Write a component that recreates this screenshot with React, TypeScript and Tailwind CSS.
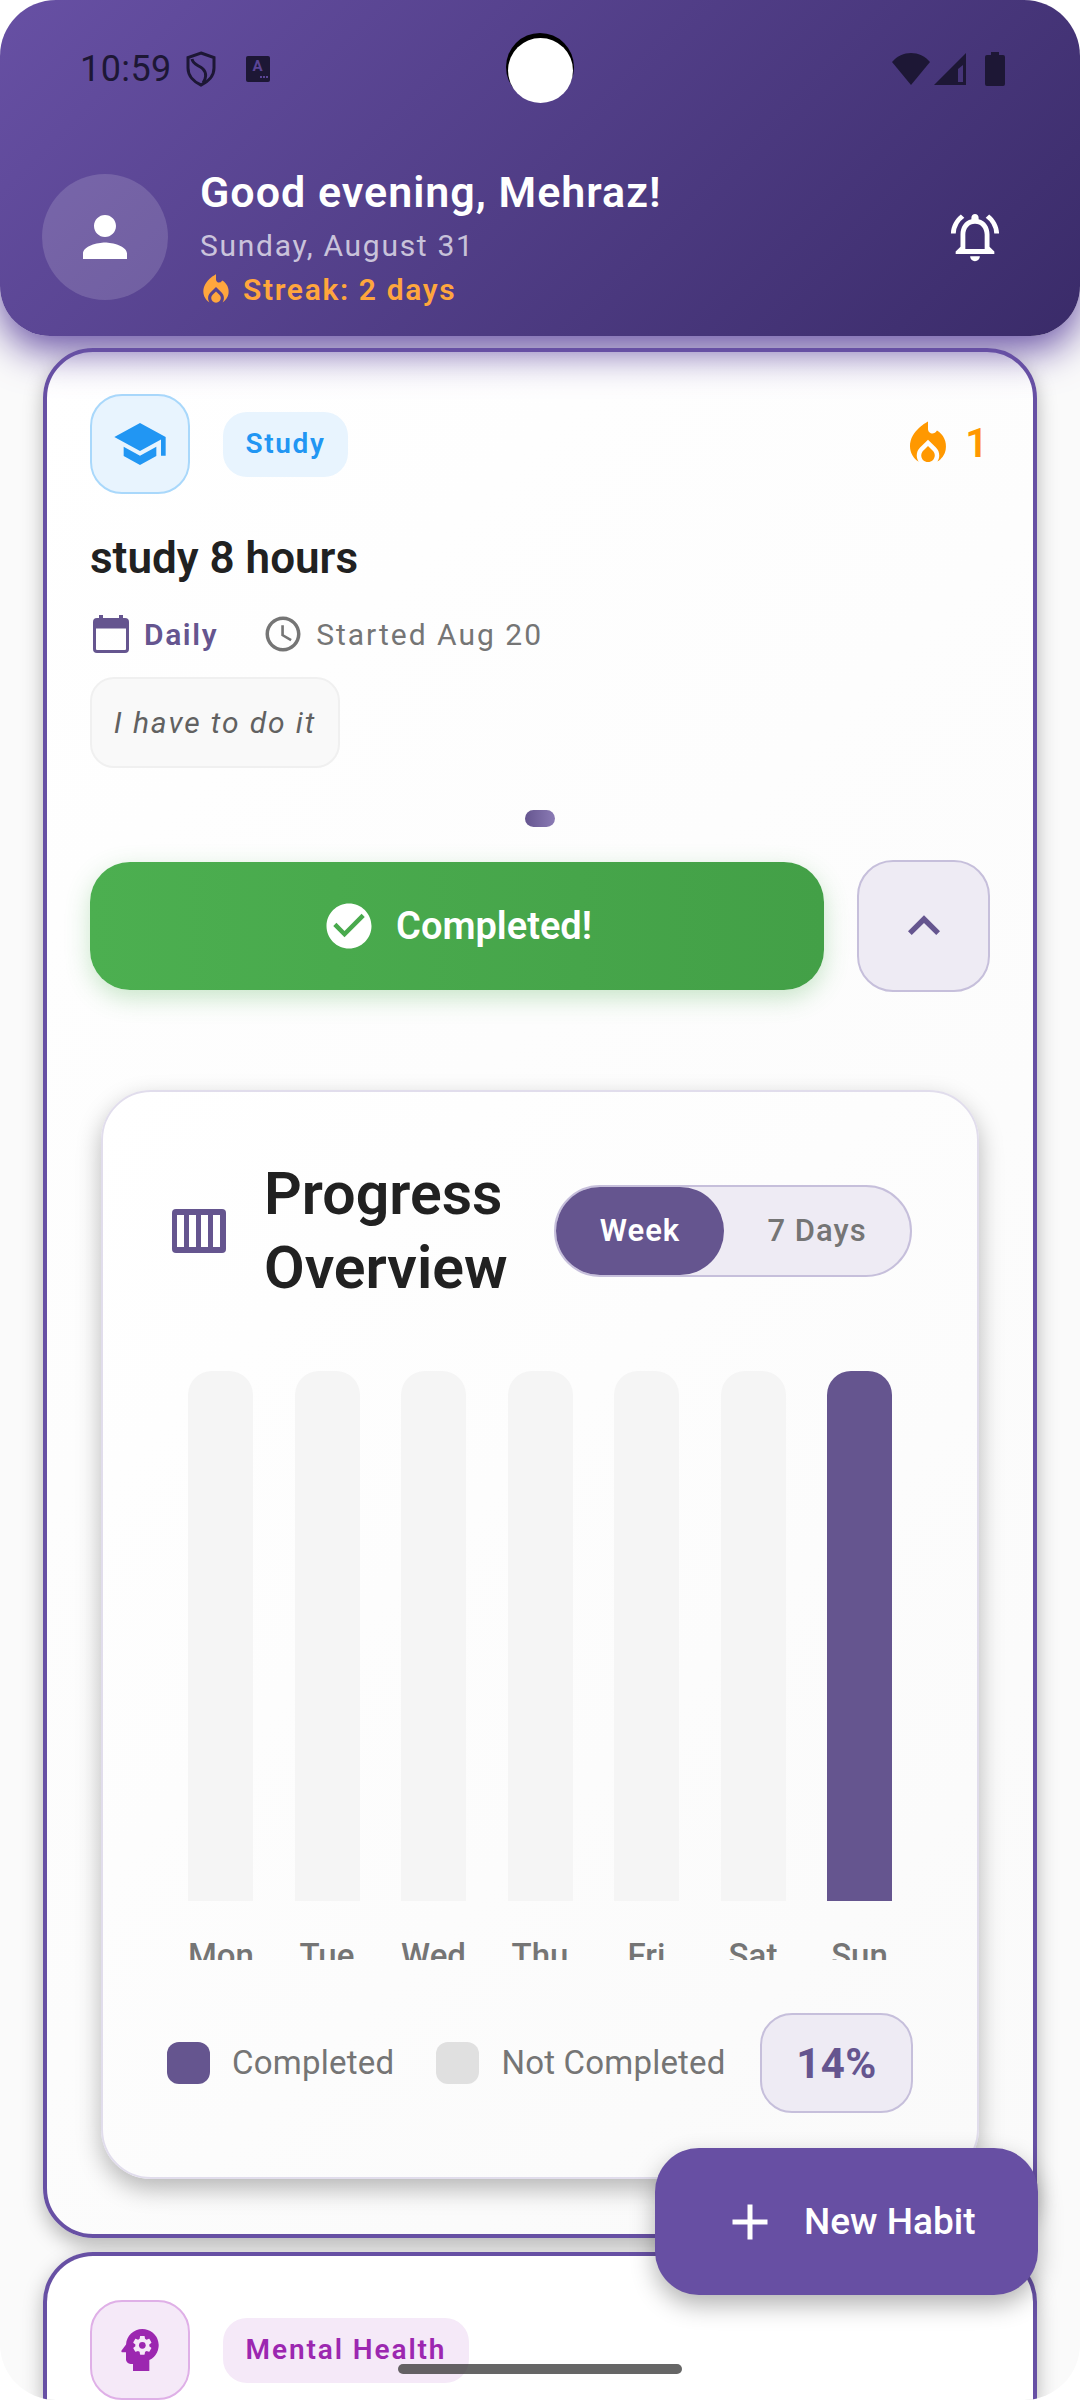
import {
  MdAccessTime,
  MdAdd,
  MdCheckCircle,
  MdExpandLess,
  MdLocalFireDepartment,
  MdOutlineNotificationsActive,
  MdPerson,
  MdPsychology,
  MdSchool,
} from 'react-icons/md';

const DAYS = ['Mon', 'Tue', 'Wed', 'Thu', 'Fri', 'Sat', 'Sun'];

function StatusBar() {
  return (
    <div className="flex h-[50px] items-center justify-between pl-[80px] pr-[75px] text-[#1d1735]">
      <div className="flex items-center">
        <span className="text-[36px] leading-none tracking-[0.4px]">10:59</span>
        {/* shield */}
        <svg width="32" height="36" viewBox="0 0 32 36" className="ml-[13px]" fill="none" stroke="currentColor" strokeWidth="3">
          <path d="M16 2 L29 6.5 V17 C29 25 23 31 16 34 C9 31 3 25 3 17 V6.5 Z" />
          <path d="M7 8 C8 14 14 14 18 18 C22 22 21 28 18 32" />
        </svg>
        <div className="ml-[29px] flex h-[26px] w-[24px] flex-col items-center rounded-[2px] bg-current">
          <span className="text-[15px] font-bold leading-[20px] text-[#5b4595]">A</span>
          <div className="flex w-full justify-end gap-[1px] pr-[2px]">
            <span className="h-[2px] w-[2px] bg-[#5b4595]" />
            <span className="h-[2px] w-[2px] bg-[#5b4595]" />
            <span className="h-[2px] w-[2px] bg-[#5b4595]" />
          </div>
        </div>
      </div>
      <div className="flex items-center">
        <svg width="38" height="32" viewBox="0 0 38 32" fill="currentColor">
          <path d="M0 9 C10 -3 28 -3 38 9 L19 32 Z" />
        </svg>
        <svg width="32" height="32" viewBox="0 0 32 32" fill="currentColor" className="ml-[4px]">
          <path fillRule="evenodd" d="M32 0 V32 H0 Z M29 12 L24 16 V29 H29 Z" />
        </svg>
        <svg width="20" height="34" viewBox="0 0 20 34" fill="currentColor" className="ml-[19px]">
          <path d="M6 0 H14 V3 H18 Q20 3 20 5 V32 Q20 34 18 34 H2 Q0 34 0 32 V5 Q0 3 2 3 H6 Z" />
        </svg>
      </div>
    </div>
  );
}

function Header() {
  return (
    <div className="relative z-10 h-[336px] rounded-b-[50px] bg-[linear-gradient(135deg,#6750a4,#3a2b69)] pt-[44px] shadow-[0_14px_40px_rgba(103,80,164,1)]">
      <StatusBar />
      <div className="mt-[73px] flex items-center pl-[42px] pr-[76px]">
        <div className="-mt-[3px] flex h-[126px] w-[126px] items-center justify-center rounded-full bg-white/15">
          <MdPerson size={66} className="text-white" />
        </div>
        <div className="ml-[32px] flex-1">
          <div className="text-[43px] font-semibold leading-[50px] tracking-[1px] text-white">Good evening, Mehraz!</div>
          <div className="mt-[12px] text-[30px] leading-[34px] tracking-[1.7px] text-white/70">Sunday, August 31</div>
          <div className="mt-[8px] flex items-center text-[30px] font-semibold leading-[34px] tracking-[1.65px] text-[#ffa63d]">
            <MdLocalFireDepartment size={38} className="-ml-[3px] mr-[8px]" />
            Streak: 2 days
          </div>
        </div>
        <MdOutlineNotificationsActive size={58} className="-mt-[3px] text-white" />
      </div>
    </div>
  );
}

function ProgressOverview() {
  return (
    <div className="mx-[11px] mt-[98px] rounded-[50px] border-[2px] border-[#e1ddec] bg-[linear-gradient(135deg,#ffffff,#fafafa)] px-[64px] pb-[64px] pt-[65px] shadow-[0_10px_24px_rgba(0,0,0,0.28)]">
      <div className="flex items-center">
        {/* week columns */}
        <svg width="54" height="44" viewBox="0 0 54 44" className="ml-[5px] shrink-0">
          <rect width="54" height="44" rx="4" fill="#65558f" />
          <rect x="5" y="6" width="7" height="32" fill="#fff" />
          <rect x="17" y="6" width="7" height="32" fill="#fff" />
          <rect x="29" y="6" width="7" height="32" fill="#fff" />
          <rect x="41" y="6" width="7" height="32" fill="#fff" />
        </svg>
        <div className="ml-[38px] w-[262px] text-[59px] font-semibold leading-[74px] text-[#212121]">Progress Overview</div>
        <div className="ml-[28px] flex h-[92px] w-[358px] items-center rounded-full border-[2px] border-[#c6bfdb] bg-[#eeebf4]">
          <div className="flex h-full w-[168px] items-center justify-center rounded-full bg-[#65558f] text-[31px] font-semibold tracking-[1px] text-white">Week</div>
          <div className="flex-1 text-center text-[31px] font-medium tracking-[1px] text-[#757575]">7 Days</div>
        </div>
      </div>

      <div className="mt-[66px] px-[21px]">
        <div className="flex justify-between">
          {DAYS.map((day) => (
            <div
              key={day}
              className={`h-[530px] w-[65px] rounded-t-[24px] ${day === 'Sun' ? 'bg-[#65558f]' : 'bg-[#f5f5f5]'}`}
            />
          ))}
        </div>
        <div className="mt-[36px] flex h-[23px] justify-between overflow-hidden">
          {DAYS.map((day) => (
            <div key={day} className="w-[65px] whitespace-nowrap text-center text-[33px] font-medium leading-[38px] text-[#757575]">
              {day}
            </div>
          ))}
        </div>
      </div>

      <div className="mt-[53px] flex items-center">
        <span className="h-[42px] w-[43px] rounded-[12px] bg-[#65558f]" />
        <span className="ml-[22px] text-[33px] tracking-[0.25px] text-[#757575]">Completed</span>
        <span className="ml-[42px] h-[42px] w-[43px] rounded-[12px] bg-[#e0e0e0]" />
        <span className="ml-[22px] whitespace-nowrap text-[33px] tracking-[0.2px] text-[#757575]">Not Completed</span>
        <div className="ml-auto flex h-[100px] w-[153px] shrink-0 items-center justify-center rounded-[32px] border-[2px] border-[#c6bfdb] bg-[#eeebf4] text-[42px] font-bold tracking-[0.5px] text-[#65558f]">
          14%
        </div>
      </div>
    </div>
  );
}

function StudyCard() {
  return (
    <div className="rounded-[50px] border-[4px] border-[#6750a4] bg-[linear-gradient(135deg,#ffffff,#fafafa)] px-[43px] pb-[55px] pt-[42px] shadow-[0_8px_20px_rgba(0,0,0,0.28)]">
      <div className="flex items-center">
        <div className="flex h-[100px] w-[100px] items-center justify-center rounded-[32px] border-[2px] border-[#a9d8fb] bg-[#e8f4fe]">
          <MdSchool size={56} className="text-[#2196f3]" />
        </div>
        <div className="ml-[33px] flex h-[65px] w-[125px] items-center justify-center rounded-[24px] bg-[#e8f4fe] text-[28px] font-semibold tracking-[1.6px] text-[#2196f3]">
          Study
        </div>
        <div className="ml-auto flex items-center text-[#ff9800]">
          <MdLocalFireDepartment size={54} />
          <span className="ml-[10px] mr-[2px] text-[40px] font-semibold leading-none">1</span>
        </div>
      </div>

      <div className="mt-[40px] text-[44px] font-semibold leading-[48px] text-[#212121]">study 8 hours</div>

      <div className="mt-[28px] flex h-[48px] items-center text-[30px]">
        {/* calendar with filled top band */}
        <svg width="36" height="38" viewBox="0 0 36 38" className="ml-[3px] shrink-0">
          <rect x="6" y="0" width="4" height="6" fill="#65558f" />
          <rect x="26" y="0" width="4" height="6" fill="#65558f" />
          <rect x="1.5" y="4.5" width="33" height="32" rx="2.5" fill="none" stroke="#65558f" strokeWidth="3" />
          <rect x="1.5" y="4.5" width="33" height="9" fill="#65558f" />
        </svg>
        <span className="ml-[15px] font-semibold tracking-[1.6px] text-[#65558f]">Daily</span>
        <MdAccessTime size={42} className="ml-[44px] text-[#757575]" />
        <span className="ml-[12px] tracking-[2px] text-[#757575]">Started Aug 20</span>
      </div>

      <div className="mt-[19px] flex h-[91px] w-[250px] items-center justify-center rounded-[24px] border-[2px] border-[#f0f0f0] bg-[#f9f9f9] text-[30px] italic tracking-[1.9px] text-[#616161]">
        I have to do it
      </div>

      <div className="mx-auto mt-[42px] h-[17px] w-[30px] rounded-full bg-[linear-gradient(90deg,#65558f,#8b7bb5)]" />

      <div className="mt-[33px] flex items-center gap-[33px]">
        <div className="flex h-[128px] flex-1 items-center justify-center rounded-[40px] bg-[linear-gradient(90deg,#4caf50,#43a047)] text-[38px] font-semibold text-white shadow-[0_8px_24px_rgba(76,175,80,0.3)]">
          <MdCheckCircle size={54} className="mr-[20px]" />
          Completed!
        </div>
        <div className="flex h-[132px] w-[133px] items-center justify-center rounded-[36px] border-[2px] border-[#c6bfdb] bg-[#eeebf4]">
          <MdExpandLess size={64} className="text-[#65558f]" />
        </div>
      </div>

      <ProgressOverview />
    </div>
  );
}

function MentalHealthCard() {
  return (
    <div className="mt-[14px] rounded-t-[50px] border-[4px] border-b-0 border-[#6750a4] bg-white px-[43px] pt-[44px] shadow-[0_8px_20px_rgba(0,0,0,0.28)]">
      <div className="flex items-center">
        <div className="flex h-[100px] w-[100px] items-center justify-center rounded-[32px] border-[2px] border-[#dfb0e7] bg-[#f5e9f8]">
          <MdPsychology size={56} className="text-[#9c27b0]" />
        </div>
        <div className="ml-[33px] flex h-[65px] w-[246px] items-center justify-center rounded-[24px] bg-[#f5e9f8] text-[28px] font-semibold tracking-[1.9px] text-[#9c27b0]">
          Mental Health
        </div>
      </div>
    </div>
  );
}

export default function App() {
  return (
    <div className="h-[2400px] w-[1080px] bg-white font-['Roboto',sans-serif]">
      <div className="relative h-full overflow-hidden rounded-[56px] bg-[#fafafa]">
        <Header />

        <div className="px-[43px] pt-[12px]">
          <StudyCard />
          <MentalHealthCard />
        </div>

        {/* punch hole camera */}
        <div className="absolute left-[506px] top-[33px] z-20 h-[68px] w-[68px] rounded-full bg-black">
          <div className="mx-auto mt-[5px] h-[65px] w-[65px] rounded-full bg-white" />
        </div>

        <button className="absolute left-[655px] top-[2148px] z-20 flex h-[147px] w-[383px] items-center rounded-[44px] bg-[#674fa3] pl-[65px] text-[37px] font-medium text-white shadow-[0_10px_24px_rgba(0,0,0,0.3)]">
          <MdAdd size={60} className="mr-[24px]" />
          New Habit
        </button>

        <div className="absolute left-[398px] top-[2364px] z-30 h-[10px] w-[284px] rounded-full bg-[#333333]/75" />
      </div>
    </div>
  );
}
